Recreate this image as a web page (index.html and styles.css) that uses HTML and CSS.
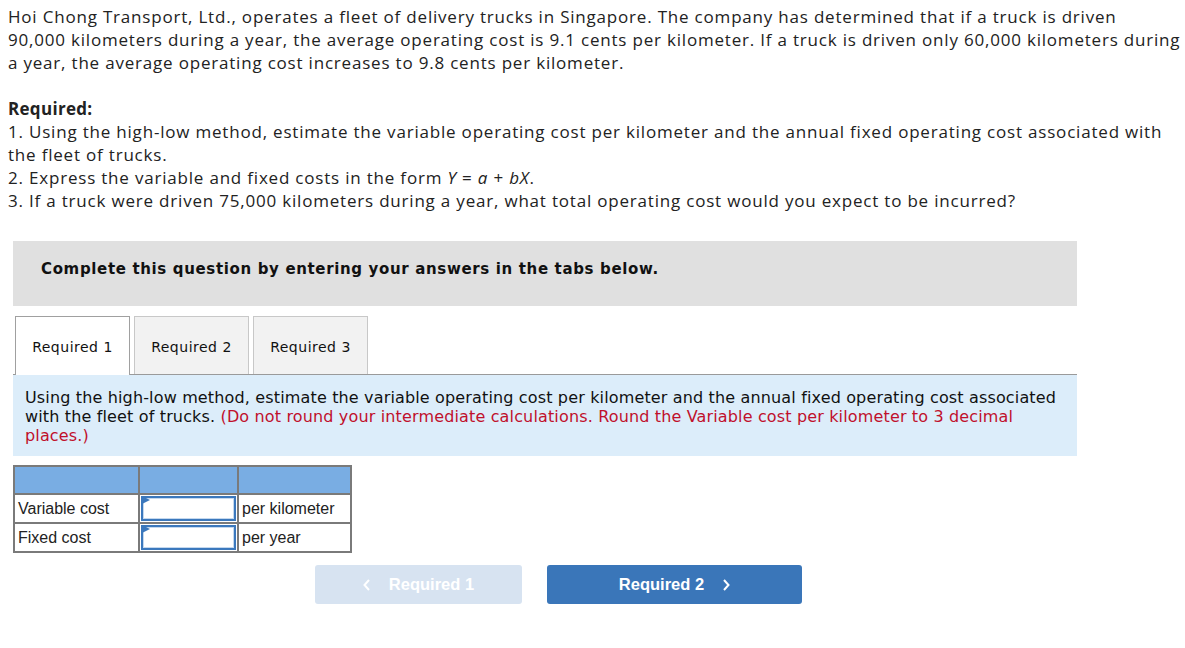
FILE: index.html
```html
<!DOCTYPE html>
<html>
<head>
<meta charset="utf-8">
<link rel="stylesheet" href="styles.css">
</head>
<body>
<div class="page">
  <p class="intro">Hoi Chong Transport, Ltd., operates a fleet of delivery trucks in Singapore. The company has determined that if a truck is driven<br>90,000 kilometers during a year, the average operating cost is 9.1 cents per kilometer. If a truck is driven only 60,000 kilometers during a year, the average operating cost increases to 9.8 cents per kilometer.</p>
  <div class="required">
    <div class="req-title">Required:</div>
    <div>1. Using the high-low method, estimate the variable operating cost per kilometer and the annual fixed operating cost associated with the fleet of trucks.</div>
    <div>2. Express the variable and fixed costs in the form <i>Y</i> = <i>a</i> + <i>bX</i>.</div>
    <div>3. If a truck were driven 75,000 kilometers during a year, what total operating cost would you expect to be incurred?</div>
  </div>

  <div class="question">
    <div class="banner">Complete this question by entering your answers in the tabs below.</div>
    <div class="tabs">
      <div class="tab active">Required 1</div>
      <div class="tab">Required 2</div>
      <div class="tab">Required 3</div>
    </div>
    <div class="instructions">Using the high-low method, estimate the variable operating cost per kilometer and the annual fixed operating cost associated with the fleet of trucks. <span class="red">(Do not round your intermediate calculations. Round the Variable cost per kilometer to 3 decimal places.)</span></div>

    <table class="answers">
      <tr class="head"><td class="c1"></td><td class="c2"></td><td class="c3"></td></tr>
      <tr><td class="c1">Variable cost</td><td class="c2 inp"><div class="field"></div></td><td class="c3">per kilometer</td></tr>
      <tr><td class="c1">Fixed cost</td><td class="c2 inp"><div class="field"></div></td><td class="c3">per year</td></tr>
    </table>

    <div class="nav">
      <div class="btn prev">
        <svg class="ico" width="8" height="12" viewBox="0 0 8 12"><path d="M6 1 L1.5 6 L6 11" fill="none" stroke="#fff" stroke-width="2"/></svg>
        <span>Required 1</span></div>
      <div class="btn next"><span>Required 2</span>
        <svg class="ico" width="8" height="12" viewBox="0 0 8 12"><path d="M2 1 L6.5 6 L2 11" fill="none" stroke="#fff" stroke-width="2"/></svg></div>
    </div>
  </div>
</div>
</body>
</html>
```
FILE: styles.css
```css
html, body { margin: 0; padding: 0; background: #fff; }
.page { padding: 5px 0 0 8px; }
.intro, .required {
  margin: 0;
  font-family: "Open Sans", sans-serif;
  font-size: 17px;
  letter-spacing: 0.8px;
  line-height: 23px;
  color: #222;
  width: 1177px;
}
.required { margin-top: 23px; }
.req-title { font-weight: bold; letter-spacing: 0.3px; }
.question { margin-left: 5px; width: 1064px; margin-top: 29px; }
.banner {
  background: #e0e0e0;
  height: 65px;
  box-sizing: border-box;
  padding: 18px 28px 0;
  font-family: "DejaVu Sans", Verdana, sans-serif;
  font-weight: bold;
  font-size: 15px;
  letter-spacing: 0.65px;
  line-height: 20px;
  color: #111;
}
.tabs {
  display: flex;
  gap: 4px;
  margin-top: 10px;
  padding-left: 2px;
  border-bottom: 1px solid #9a9a9a;
}
.tab {
  width: 115px;
  height: 58px;
  box-sizing: border-box;
  border: 1px solid #c8c8c8;
  border-bottom: none;
  background: #f2f2f2;
  font-family: "DejaVu Sans", Verdana, sans-serif;
  font-size: 14px;
  letter-spacing: 0.5px;
  color: #111;
  display: flex;
  align-items: center;
  justify-content: center;
  padding-top: 2px;
}
.tab.active {
  background: #fff;
  border-color: #a0a0a0;
  height: 59px;
  margin-bottom: -1px;
}
.instructions {
  background: #dcedfa;
  padding: 13px 12px 10px;
  font-family: "DejaVu Sans", Verdana, sans-serif;
  font-size: 16px;
  letter-spacing: 0.15px;
  line-height: 19px;
  color: #111;
  min-height: 81px;
  box-sizing: border-box;
}
.red { color: #c0102c; }
.answers {
  margin-top: 9px;
  border-collapse: collapse;
  font-family: "Liberation Sans", Arial, sans-serif;
  font-size: 16px;
  color: #222;
}
.answers td {
  border: 2px solid #7a7a7a;
  padding: 0 3px;
  height: 25px;
}
.answers .head td { background: #79ade3; height: 26px; }
.answers .c1 { width: 117px; }
.answers .c2 { width: 91px; }
.answers .c3 { width: 105px; }
.answers td.inp { padding: 0; }
.field {
  height: 25px;
  margin: 1px;
  border: 2px solid #3b78bd;
  background: #fff;
  box-sizing: border-box;
  position: relative;
  box-shadow: inset 0 0 0 1px #c4d8ee;
}
.field::before {
  content: "";
  position: absolute;
  left: -1px;
  top: -2px;
  border-left: 8px solid #3b78bd;
  border-top: 4px solid transparent;
  border-bottom: 4px solid transparent;
}
.nav {
  display: flex;
  gap: 25px;
  margin-top: 12px;
  margin-left: 302px;
}
.btn {
  height: 39px;
  border-radius: 3px;
  display: flex;
  align-items: center;
  justify-content: center;
  font-family: "Liberation Sans", Arial, sans-serif;
  font-weight: bold;
  font-size: 16.5px;
  color: #fff;
  gap: 18px;
  box-sizing: border-box;
}
.btn.prev { width: 207px; background: #d7e3f1; }
.btn.next { width: 255px; background: #3a76b9; }
```
